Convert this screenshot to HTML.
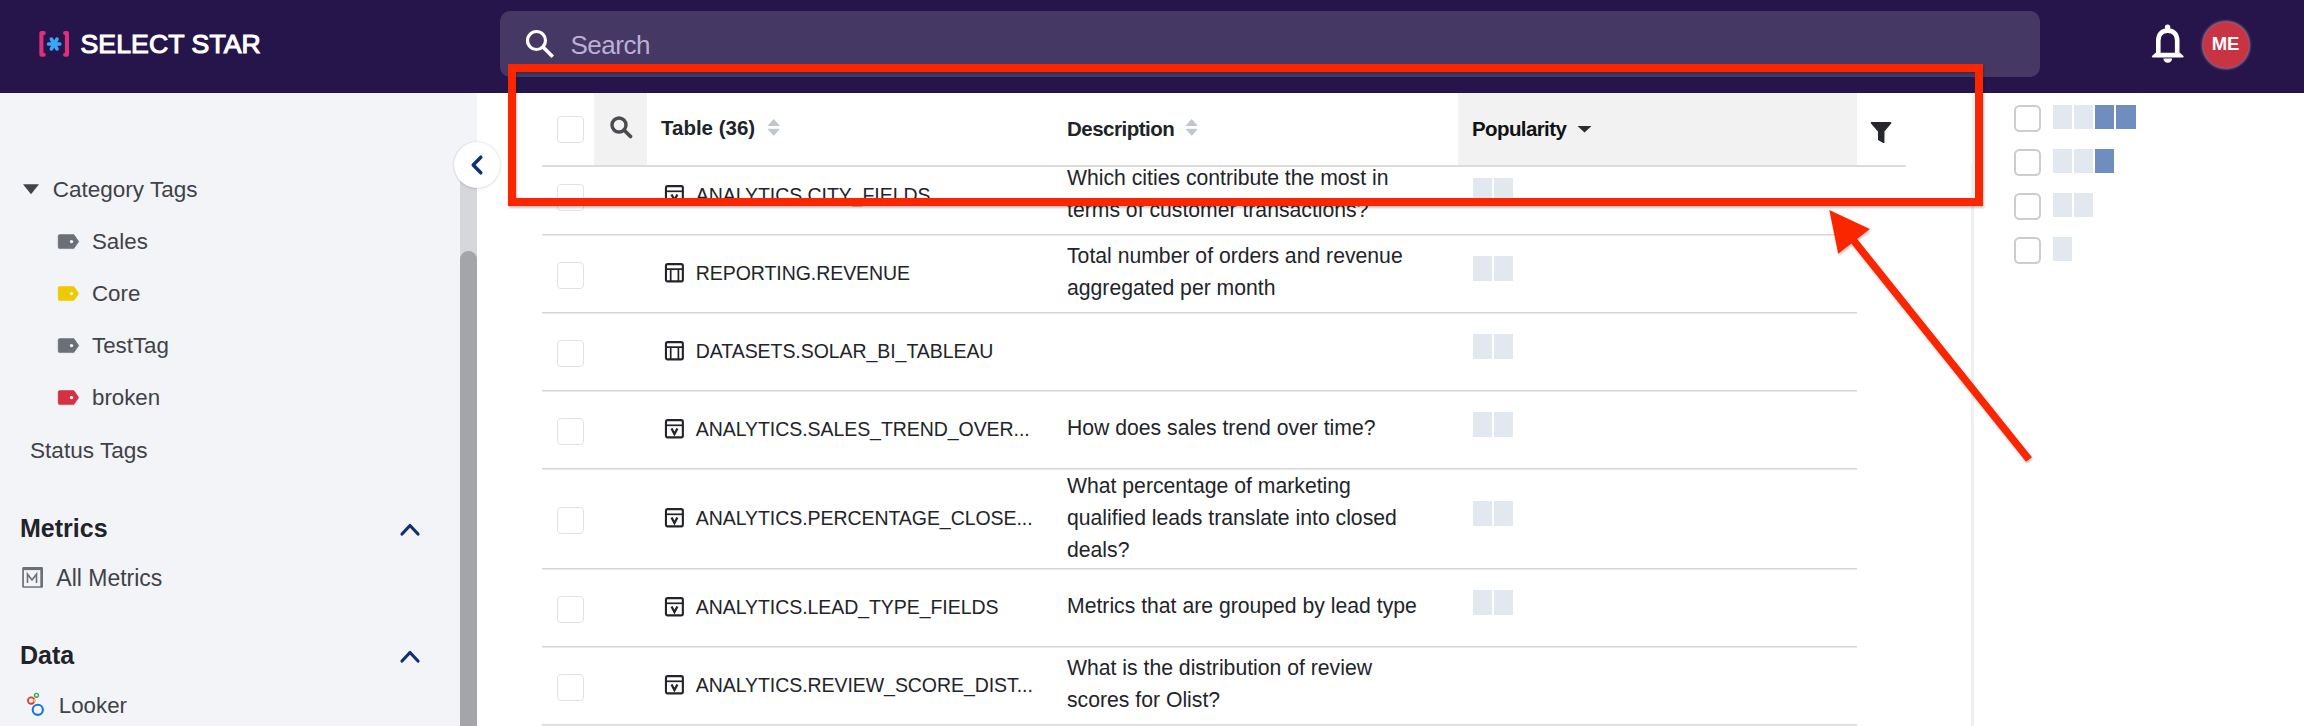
<!DOCTYPE html>
<html><head><meta charset="utf-8">
<style>
*{box-sizing:border-box;margin:0;padding:0}
html,body{width:2304px;height:726px;overflow:hidden;background:#fff;font-family:"Liberation Sans",sans-serif}
.a{position:absolute}
.t{position:absolute;white-space:nowrap;font-family:"Liberation Sans",sans-serif}
.cb{position:absolute;width:27px;height:27px;border:1.5px solid #dde3eb;border-radius:4px;background:#fff}
.sep{position:absolute;left:542px;width:1315px;height:2px;background:linear-gradient(#d6d6d6 50%,#e9e9e9 50%)}
.sq{position:absolute;width:19.5px;height:24px;background:#e2e8f0}
</style></head>
<body>
<div class="a" style="left:0;top:0;width:2304px;height:93px;background:#26154a"></div>
<svg class="a" style="left:32px;top:25px" width="44" height="38" viewBox="0 0 44 38">
  <path d="M11.8 8.1 H9.4 V29.7 H11.8" fill="none" stroke="#d9327a" stroke-width="4.1" stroke-linejoin="round" stroke-linecap="round"/>
  <path d="M33.1 8.1 H34.95 V29.7 H33.1" fill="none" stroke="#d9327a" stroke-width="4.1" stroke-linejoin="round" stroke-linecap="round"/>
  <g stroke="#3ba6f6" stroke-width="3.7" stroke-linecap="round">
    <line x1="16.6" y1="19" x2="27.8" y2="19"/>
    <line x1="19.4" y1="14.15" x2="25" y2="23.85"/>
    <line x1="25" y1="14.15" x2="19.4" y2="23.85"/>
  </g>
</svg>
<div class="t" style="left:80.5px;top:31.08px;font-size:26.6px;line-height:26.6px;font-weight:400;color:#fff;letter-spacing:0.1px;-webkit-text-stroke:1.1px #fff">SELECT STAR</div>
<div class="a" style="left:500px;top:11px;width:1540px;height:65.5px;border-radius:10px;background:#463864"></div>
<svg class="a" style="left:524px;top:28px" width="32" height="32" viewBox="0 0 32 32">
  <circle cx="12.5" cy="12.5" r="9" fill="none" stroke="#fff" stroke-width="3.2"/>
  <line x1="19" y1="19" x2="27.5" y2="27.5" stroke="#fff" stroke-width="3.6" stroke-linecap="square"/>
</svg>
<div class="t" style="left:570.5px;top:31.99px;font-size:26px;line-height:26px;font-weight:400;color:#bcafd4;letter-spacing:-0.5px">Search</div>
<svg class="a" style="left:2148px;top:22px" width="40" height="44" viewBox="0 0 40 44">
  <circle cx="19.6" cy="5.2" r="2.7" fill="#fff"/>
  <path d="M10.3 32 V18.5 C10.3 12 14.2 8.6 19.75 8.6 C25.3 8.6 29.2 12 29.2 18.5 V32" fill="none" stroke="#fff" stroke-width="4.6"/>
  <path d="M5.2 35.4 Q3 35.4 4.3 33.8 L7.6 30.8 H31.9 L35.2 33.8 Q36.5 35.4 34.3 35.4 Z" fill="#fff"/>
  <path d="M15.4 36.4 H24.1 A4.35 4.35 0 0 1 15.4 36.4 Z" fill="#fff"/>
</svg>
<div class="a" style="left:2202.5px;top:21.5px;width:46px;height:46px;border-radius:50%;background:#c93444;box-shadow:0 0 2.5px 1px rgba(255,195,210,0.6)"></div>
<div class="t" style="left:2202.5px;width:46px;text-align:center;top:34.8px;font-size:18.5px;line-height:18.5px;font-weight:700;color:#fff">ME</div>
<div class="a" style="left:0;top:93px;width:477px;height:633px;background:#f3f4f8"></div>
<div class="a" style="left:460px;top:165px;width:17px;height:561px;background:#d6d7db"></div>
<div class="a" style="left:460px;top:251px;width:17px;height:500px;border-radius:8.5px;background:#a4a5a9"></div>
<svg class="a" style="left:22px;top:183px" width="18" height="12" viewBox="0 0 18 12"><path d="M1 1.2 H17 L9 11.2 Z" fill="#404348"/></svg>
<div class="t" style="left:52.8px;top:178.55px;font-size:22.5px;line-height:22.5px;font-weight:400;color:#3f4247;">Category Tags</div>
<svg class="a" style="left:57px;top:233.5px" width="24" height="17" viewBox="0 0 24 17"><path d="M2.7 0.6 H16.9 L21.7 7.6 L16.9 14.6 H2.7 Q1.2 14.6 1.2 13.1 V2.1 Q1.2 0.6 2.7 0.6 Z" fill="#6b6f78" stroke="#6b6f78" stroke-width="0.6" stroke-linejoin="round"/><circle cx="14.5" cy="7.6" r="1.65" fill="#fff"/></svg>
<div class="t" style="left:92px;top:231.32px;font-size:22.3px;line-height:22.3px;font-weight:400;color:#3f4247;">Sales</div>
<svg class="a" style="left:57px;top:285.5px" width="24" height="17" viewBox="0 0 24 17"><path d="M2.7 0.6 H16.9 L21.7 7.6 L16.9 14.6 H2.7 Q1.2 14.6 1.2 13.1 V2.1 Q1.2 0.6 2.7 0.6 Z" fill="#eec900" stroke="#eec900" stroke-width="0.6" stroke-linejoin="round"/><circle cx="14.5" cy="7.6" r="1.65" fill="#fff"/></svg>
<div class="t" style="left:92px;top:283.32px;font-size:22.3px;line-height:22.3px;font-weight:400;color:#3f4247;">Core</div>
<svg class="a" style="left:57px;top:337.5px" width="24" height="17" viewBox="0 0 24 17"><path d="M2.7 0.6 H16.9 L21.7 7.6 L16.9 14.6 H2.7 Q1.2 14.6 1.2 13.1 V2.1 Q1.2 0.6 2.7 0.6 Z" fill="#6b6f78" stroke="#6b6f78" stroke-width="0.6" stroke-linejoin="round"/><circle cx="14.5" cy="7.6" r="1.65" fill="#fff"/></svg>
<div class="t" style="left:92px;top:335.32px;font-size:22.3px;line-height:22.3px;font-weight:400;color:#3f4247;">TestTag</div>
<svg class="a" style="left:57px;top:389.5px" width="24" height="17" viewBox="0 0 24 17"><path d="M2.7 0.6 H16.9 L21.7 7.6 L16.9 14.6 H2.7 Q1.2 14.6 1.2 13.1 V2.1 Q1.2 0.6 2.7 0.6 Z" fill="#d43144" stroke="#d43144" stroke-width="0.6" stroke-linejoin="round"/><circle cx="14.5" cy="7.6" r="1.65" fill="#fff"/></svg>
<div class="t" style="left:92px;top:387.32px;font-size:22.3px;line-height:22.3px;font-weight:400;color:#3f4247;">broken</div>
<div class="t" style="left:30px;top:439.67px;font-size:22.6px;line-height:22.6px;font-weight:400;color:#3f4247;">Status Tags</div>
<div class="t" style="left:20px;top:515.54px;font-size:25px;line-height:25px;font-weight:700;color:#212328;">Metrics</div>
<svg class="a" style="left:398px;top:520px" width="24" height="18" viewBox="0 0 24 18"><path d="M4 14 L12 5.5 L20 14" fill="none" stroke="#10306e" stroke-width="3.2" stroke-linecap="round" stroke-linejoin="round"/></svg>
<svg class="a" style="left:20px;top:565px" width="26" height="26" viewBox="0 0 26 26">
  <path d="M3.6 2 H21.8 Q23 2 23 3.2 V21.4 Q23 22.7 21.7 22.7 H3.4 Q2.2 22.7 2.2 21.5 V3.4 Q2.2 2 3.6 2 Z" fill="#6b6f78"/>
  <rect x="3.9" y="5.1" width="16.4" height="16.2" fill="#f3f4f8"/>
  <path d="M7.5 17.9 V9.2 L12 15 L16.5 9.2 V17.9" fill="none" stroke="#6b6f78" stroke-width="1.6" stroke-linejoin="miter"/>
</svg>
<div class="t" style="left:56.3px;top:566.93px;font-size:23px;line-height:23px;font-weight:400;color:#3f4247;">All Metrics</div>
<div class="t" style="left:20px;top:642.84px;font-size:25px;line-height:25px;font-weight:700;color:#212328;">Data</div>
<svg class="a" style="left:398px;top:647px" width="24" height="18" viewBox="0 0 24 18"><path d="M4 14 L12 5.5 L20 14" fill="none" stroke="#10306e" stroke-width="3.2" stroke-linecap="round" stroke-linejoin="round"/></svg>
<svg class="a" style="left:20px;top:688px" width="30" height="32" viewBox="0 0 30 32">
  <circle cx="16.5" cy="7.3" r="1.95" fill="none" stroke="#34a853" stroke-width="1.4"/>
  <circle cx="11.2" cy="12.6" r="3.3" fill="none" stroke="#d93b2b" stroke-width="1.7"/>
  <path d="M14.4 11.2 A3.3 3.3 0 0 1 14.3 14" fill="none" stroke="#f4c20d" stroke-width="1.7"/>
  <circle cx="17.8" cy="21.8" r="5.1" fill="none" stroke="#1a73e8" stroke-width="2.1"/>
</svg>
<div class="t" style="left:58.8px;top:695.12px;font-size:22.3px;line-height:22.3px;font-weight:400;color:#3f4247;">Looker</div>
<div class="a" style="left:1971px;top:93px;width:2.5px;height:633px;background:#eef0f4"></div>
<div class="sep" style="top:234px"></div>
<div class="cb" style="left:557px;top:183.5px"></div>
<svg class="a" style="left:663px;top:184.0px" width="22" height="22" viewBox="0 0 22 22"><rect x="2.95" y="2.1" width="16.9" height="17.3" rx="1.6" fill="none" stroke="#222429" stroke-width="2.1"/><path d="M2.95 7.3 H19.85" stroke="#222429" stroke-width="1.7" fill="none"/><path d="M8.5 10.5 L11.45 16 L14.4 10.5" stroke="#222429" stroke-width="2.3" fill="none" stroke-linejoin="miter"/></svg>
<div class="t" style="left:695.8px;top:185.99px;font-size:19.5px;line-height:19.5px;font-weight:400;color:#222429;letter-spacing:-0.06px">ANALYTICS.CITY_FIELDS</div>
<div class="t" style="left:1067px;top:166.75px;font-size:21.2px;line-height:21.2px;font-weight:400;color:#222429;">Which cities contribute the most in</div>
<div class="t" style="left:1067px;top:198.95px;font-size:21.2px;line-height:21.2px;font-weight:400;color:#222429;">terms of customer transactions?</div>
<div class="sq" style="left:1473.0px;top:178.0px;width:19.3px;height:24.6px"></div>
<div class="sq" style="left:1494.0px;top:178.0px;width:19.3px;height:24.6px"></div>
<div class="sep" style="top:312px"></div>
<div class="cb" style="left:557px;top:261.5px"></div>
<svg class="a" style="left:663px;top:262.0px" width="22" height="22" viewBox="0 0 22 22"><rect x="2.95" y="2.1" width="16.9" height="17.3" rx="1.6" fill="none" stroke="#222429" stroke-width="2.1"/><path d="M2.95 7.1 H19.85 M7.7 7.1 V19.4 M15.4 7.1 V19.4" stroke="#222429" stroke-width="1.7" fill="none"/></svg>
<div class="t" style="left:695.8px;top:263.99px;font-size:19.5px;line-height:19.5px;font-weight:400;color:#222429;letter-spacing:-0.06px">REPORTING.REVENUE</div>
<div class="t" style="left:1067px;top:244.75px;font-size:21.2px;line-height:21.2px;font-weight:400;color:#222429;">Total number of orders and revenue</div>
<div class="t" style="left:1067px;top:276.95px;font-size:21.2px;line-height:21.2px;font-weight:400;color:#222429;">aggregated per month</div>
<div class="sq" style="left:1473.0px;top:256.0px;width:19.3px;height:24.6px"></div>
<div class="sq" style="left:1494.0px;top:256.0px;width:19.3px;height:24.6px"></div>
<div class="sep" style="top:390px"></div>
<div class="cb" style="left:557px;top:339.5px"></div>
<svg class="a" style="left:663px;top:340.0px" width="22" height="22" viewBox="0 0 22 22"><rect x="2.95" y="2.1" width="16.9" height="17.3" rx="1.6" fill="none" stroke="#222429" stroke-width="2.1"/><path d="M2.95 7.1 H19.85 M7.7 7.1 V19.4 M15.4 7.1 V19.4" stroke="#222429" stroke-width="1.7" fill="none"/></svg>
<div class="t" style="left:695.8px;top:341.99px;font-size:19.5px;line-height:19.5px;font-weight:400;color:#222429;letter-spacing:-0.06px">DATASETS.SOLAR_BI_TABLEAU</div>
<div class="sq" style="left:1473.0px;top:334.0px;width:19.3px;height:24.6px"></div>
<div class="sq" style="left:1494.0px;top:334.0px;width:19.3px;height:24.6px"></div>
<div class="sep" style="top:468px"></div>
<div class="cb" style="left:557px;top:417.5px"></div>
<svg class="a" style="left:663px;top:418.0px" width="22" height="22" viewBox="0 0 22 22"><rect x="2.95" y="2.1" width="16.9" height="17.3" rx="1.6" fill="none" stroke="#222429" stroke-width="2.1"/><path d="M2.95 7.3 H19.85" stroke="#222429" stroke-width="1.7" fill="none"/><path d="M8.5 10.5 L11.45 16 L14.4 10.5" stroke="#222429" stroke-width="2.3" fill="none" stroke-linejoin="miter"/></svg>
<div class="t" style="left:695.8px;top:419.99px;font-size:19.5px;line-height:19.5px;font-weight:400;color:#222429;letter-spacing:-0.06px">ANALYTICS.SALES_TREND_OVER...</div>
<div class="t" style="left:1067px;top:417.05px;font-size:21.2px;line-height:21.2px;font-weight:400;color:#222429;">How does sales trend over time?</div>
<div class="sq" style="left:1473.0px;top:412.0px;width:19.3px;height:24.6px"></div>
<div class="sq" style="left:1494.0px;top:412.0px;width:19.3px;height:24.6px"></div>
<div class="sep" style="top:568px"></div>
<div class="cb" style="left:557px;top:506.5px"></div>
<svg class="a" style="left:663px;top:507.0px" width="22" height="22" viewBox="0 0 22 22"><rect x="2.95" y="2.1" width="16.9" height="17.3" rx="1.6" fill="none" stroke="#222429" stroke-width="2.1"/><path d="M2.95 7.3 H19.85" stroke="#222429" stroke-width="1.7" fill="none"/><path d="M8.5 10.5 L11.45 16 L14.4 10.5" stroke="#222429" stroke-width="2.3" fill="none" stroke-linejoin="miter"/></svg>
<div class="t" style="left:695.8px;top:508.99px;font-size:19.5px;line-height:19.5px;font-weight:400;color:#222429;letter-spacing:-0.06px">ANALYTICS.PERCENTAGE_CLOSE...</div>
<div class="t" style="left:1067px;top:474.75px;font-size:21.2px;line-height:21.2px;font-weight:400;color:#222429;">What percentage of marketing</div>
<div class="t" style="left:1067px;top:506.95px;font-size:21.2px;line-height:21.2px;font-weight:400;color:#222429;">qualified leads translate into closed</div>
<div class="t" style="left:1067px;top:539.15px;font-size:21.2px;line-height:21.2px;font-weight:400;color:#222429;">deals?</div>
<div class="sq" style="left:1473.0px;top:501.0px;width:19.3px;height:24.6px"></div>
<div class="sq" style="left:1494.0px;top:501.0px;width:19.3px;height:24.6px"></div>
<div class="sep" style="top:646px"></div>
<div class="cb" style="left:557px;top:595.5px"></div>
<svg class="a" style="left:663px;top:596.0px" width="22" height="22" viewBox="0 0 22 22"><rect x="2.95" y="2.1" width="16.9" height="17.3" rx="1.6" fill="none" stroke="#222429" stroke-width="2.1"/><path d="M2.95 7.3 H19.85" stroke="#222429" stroke-width="1.7" fill="none"/><path d="M8.5 10.5 L11.45 16 L14.4 10.5" stroke="#222429" stroke-width="2.3" fill="none" stroke-linejoin="miter"/></svg>
<div class="t" style="left:695.8px;top:597.99px;font-size:19.5px;line-height:19.5px;font-weight:400;color:#222429;letter-spacing:-0.06px">ANALYTICS.LEAD_TYPE_FIELDS</div>
<div class="t" style="left:1067px;top:595.05px;font-size:21.2px;line-height:21.2px;font-weight:400;color:#222429;">Metrics that are grouped by lead type</div>
<div class="sq" style="left:1473.0px;top:590.0px;width:19.3px;height:24.6px"></div>
<div class="sq" style="left:1494.0px;top:590.0px;width:19.3px;height:24.6px"></div>
<div class="sep" style="top:724px"></div>
<div class="cb" style="left:557px;top:673.5px"></div>
<svg class="a" style="left:663px;top:674.0px" width="22" height="22" viewBox="0 0 22 22"><rect x="2.95" y="2.1" width="16.9" height="17.3" rx="1.6" fill="none" stroke="#222429" stroke-width="2.1"/><path d="M2.95 7.3 H19.85" stroke="#222429" stroke-width="1.7" fill="none"/><path d="M8.5 10.5 L11.45 16 L14.4 10.5" stroke="#222429" stroke-width="2.3" fill="none" stroke-linejoin="miter"/></svg>
<div class="t" style="left:695.8px;top:675.99px;font-size:19.5px;line-height:19.5px;font-weight:400;color:#222429;letter-spacing:-0.06px">ANALYTICS.REVIEW_SCORE_DIST...</div>
<div class="t" style="left:1067px;top:656.75px;font-size:21.2px;line-height:21.2px;font-weight:400;color:#222429;">What is the distribution of review</div>
<div class="t" style="left:1067px;top:688.95px;font-size:21.2px;line-height:21.2px;font-weight:400;color:#222429;">scores for Olist?</div>
<div class="a" style="left:477px;top:93px;width:1495px;height:72px;background:#fff"></div>
<div class="a" style="left:594px;top:93px;width:53px;height:72px;background:#f2f2f2"></div>
<div class="a" style="left:1458px;top:93px;width:399px;height:72px;background:#f2f2f2"></div>
<div class="a" style="left:542px;top:164.5px;width:1364px;height:2px;background:#dcdcdc"></div>
<div class="cb" style="left:557px;top:116px"></div>
<svg class="a" style="left:608px;top:114px" width="26" height="26" viewBox="0 0 26 26">
  <circle cx="11" cy="11" r="7" fill="none" stroke="#4b4c51" stroke-width="3.4"/>
  <line x1="16" y1="16" x2="22.5" y2="22.5" stroke="#4b4c51" stroke-width="3.8" stroke-linecap="round"/>
</svg>
<div class="t" style="left:661px;top:118.15px;font-size:20.5px;line-height:20.5px;font-weight:700;color:#202327;">Table (36)</div>
<svg class="a" style="left:766px;top:117px" width="16" height="21" viewBox="0 0 16 21"><path d="M7.7 2.6 L13.1 8.5 H2.3 Z M7.7 18.3 L13.1 12.3 H2.3 Z" fill="#c1c6cd" stroke="#c1c6cd" stroke-width="1" stroke-linejoin="round"/></svg>
<div class="t" style="left:1067px;top:118.65px;font-size:20.5px;line-height:20.5px;font-weight:700;color:#202327;letter-spacing:-0.5px">Description</div>
<svg class="a" style="left:1184px;top:117px" width="16" height="21" viewBox="0 0 16 21"><path d="M7.7 2.6 L13.1 8.5 H2.3 Z M7.7 18.3 L13.1 12.3 H2.3 Z" fill="#c1c6cd" stroke="#c1c6cd" stroke-width="1" stroke-linejoin="round"/></svg>
<div class="t" style="left:1472px;top:118.65px;font-size:20.5px;line-height:20.5px;font-weight:700;color:#111214;letter-spacing:-0.6px">Popularity</div>
<svg class="a" style="left:1576px;top:124px" width="17" height="10" viewBox="0 0 17 10"><path d="M1.5 2 H15.5 L8.5 8.5 Z" fill="#2a2c30"/></svg>
<svg class="a" style="left:1869px;top:120px" width="24" height="24" viewBox="0 0 24 24"><path d="M2.6 2.9 H21.5 L14.6 11.2 V22.2 L9.8 19.6 V11.2 Z" fill="#25272c" stroke="#25272c" stroke-width="1.7" stroke-linejoin="round"/></svg>
<div class="a" style="left:2013.5px;top:104.5px;width:27.5px;height:27.5px;border:2px solid #cdcdcd;border-radius:5.5px;background:#fff"></div>
<div class="sq" style="left:2052.5px;top:104.5px;background:#e2e8f0"></div>
<div class="sq" style="left:2073.7px;top:104.5px;background:#e2e8f0"></div>
<div class="sq" style="left:2094.9px;top:104.5px;background:#6f8dbf"></div>
<div class="sq" style="left:2116.1px;top:104.5px;background:#6f8dbf"></div>
<div class="a" style="left:2013.5px;top:148.5px;width:27.5px;height:27.5px;border:2px solid #cdcdcd;border-radius:5.5px;background:#fff"></div>
<div class="sq" style="left:2052.5px;top:148.5px;background:#e2e8f0"></div>
<div class="sq" style="left:2073.7px;top:148.5px;background:#e2e8f0"></div>
<div class="sq" style="left:2094.9px;top:148.5px;background:#6f8dbf"></div>
<div class="a" style="left:2013.5px;top:192.5px;width:27.5px;height:27.5px;border:2px solid #cdcdcd;border-radius:5.5px;background:#fff"></div>
<div class="sq" style="left:2052.5px;top:192.5px;background:#e2e8f0"></div>
<div class="sq" style="left:2073.7px;top:192.5px;background:#e2e8f0"></div>
<div class="a" style="left:2013.5px;top:236.5px;width:27.5px;height:27.5px;border:2px solid #cdcdcd;border-radius:5.5px;background:#fff"></div>
<div class="sq" style="left:2052.5px;top:236.5px;background:#e2e8f0"></div>
<div class="a" style="left:454px;top:142px;width:46px;height:46px;border-radius:50%;background:#fff;box-shadow:0 0 2px rgba(0,0,0,0.18),0 1px 3px rgba(0,0,0,0.08)"></div>
<svg class="a" style="left:466px;top:152px" width="22" height="26" viewBox="0 0 22 26">
  <path d="M14.8 5.2 L7.2 13 L14.8 20.8" fill="none" stroke="#0f3272" stroke-width="3.5" stroke-linecap="round" stroke-linejoin="round"/>
</svg>
<svg class="a" style="left:0;top:0" width="2304" height="726" viewBox="0 0 2304 726">
<defs><filter id="sh" x="-5%" y="-5%" width="110%" height="120%"><feDropShadow dx="0.8" dy="1.8" stdDeviation="1.2" flood-color="#000" flood-opacity="0.25"/></filter></defs>
<g filter="url(#sh)">
<rect x="512" y="68" width="1467" height="134" fill="none" stroke="#f92600" stroke-width="8"/>
<path d="M2029 459.5 L1852 238.5" stroke="#f92600" stroke-width="7.5" fill="none"/>
<path d="M1829.3 209.9 L1869.9 228.9 L1838.2 253.7 Z" fill="#f92600"/>
</g>
</svg>
</body></html>
